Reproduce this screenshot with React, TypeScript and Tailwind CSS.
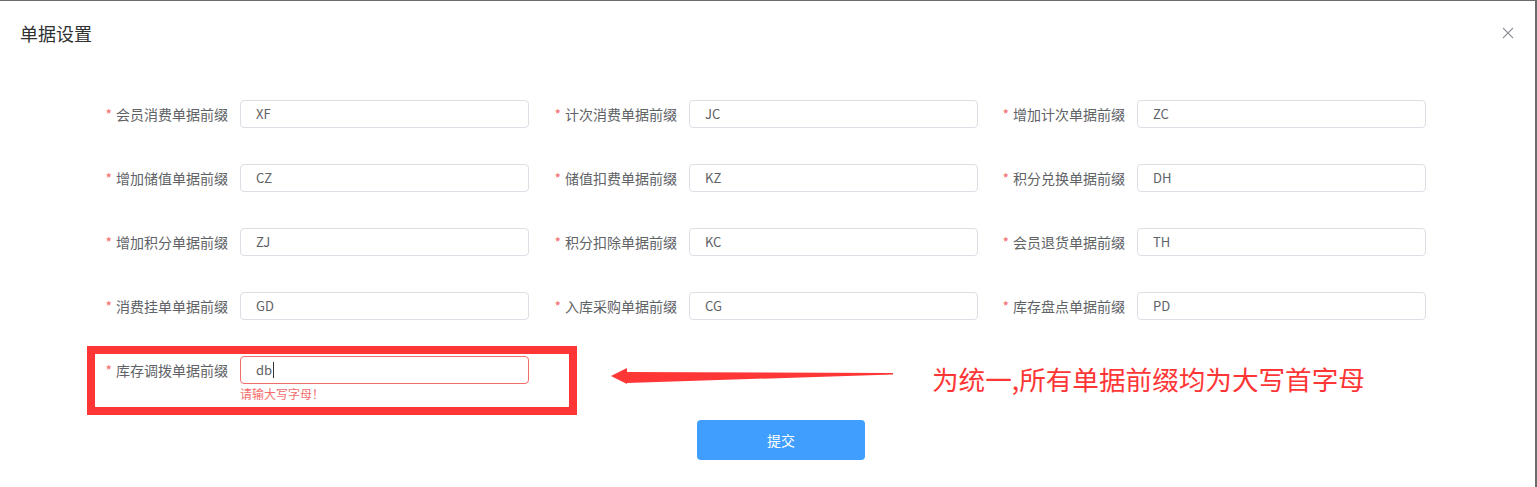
const fields = [
  { label: "会员消费单据前缀", value: "XF" },
  { label: "计次消费单据前缀", value: "JC" },
  { label: "增加计次单据前缀", value: "ZC" },
  { label: "增加储值单据前缀", value: "CZ" },
  { label: "储值扣费单据前缀", value: "KZ" },
  { label: "积分兑换单据前缀", value: "DH" },
  { label: "增加积分单据前缀", value: "ZJ" },
  { label: "积分扣除单据前缀", value: "KC" },
  { label: "会员退货单据前缀", value: "TH" },
  { label: "消费挂单单据前缀", value: "GD" },
  { label: "入库采购单据前缀", value: "CG" },
  { label: "库存盘点单据前缀", value: "PD" },
];

function FormLabel({ text }: { text: string }) {
  return (
    <label className="w-[140px] shrink-0 pr-3 text-right text-sm leading-7 text-[#606266]">
      <span className="mr-1 text-[#F56C6C]">*</span>
      {text}
    </label>
  );
}

export default function App() {
  return (
    <div
      className="relative h-[487px] w-full overflow-hidden bg-[#6b6b6b] pt-px"
      style={{ fontFamily: '"Noto Sans CJK SC", "Liberation Sans", sans-serif' }}
    >
      <div className="h-[486px] w-[1535px] bg-white">
        <div className="flex items-center justify-between px-5 pt-5">
          <span className="text-[18px] leading-6 text-[#303133]">单据设置</span>
          <svg width="12" height="12" viewBox="0 0 12 12" className="mr-px">
            <path d="M1 1L11 11M11 1L1 11" stroke="#909399" strokeWidth="1.1" fill="none" />
          </svg>
        </div>

        <div className="mt-[55px] grid grid-cols-[449px_448px_448px] gap-y-9 pl-[100px]">
          {fields.map((f) => (
            <div key={f.label} className="flex items-center">
              <FormLabel text={f.label} />
              <div className="flex h-7 w-[289px] items-center rounded border border-[#DCDFE6] px-[15px] text-[13px] text-[#606266]">
                {f.value}
              </div>
            </div>
          ))}
          <div className="flex items-center">
            <FormLabel text="库存调拨单据前缀" />
            <div className="relative w-[289px]">
              <div className="flex h-7 items-center rounded border border-[#F56C6C] px-[15px] text-[13px] text-[#606266]">
                db
                <span className="ml-px h-4 w-px bg-[#303133]" />
              </div>
              <div className="absolute left-0 top-full pt-1 text-xs leading-none text-[#F56C6C]">
                请输大写字母！
              </div>
            </div>
          </div>
        </div>

        <button className="ml-[697px] mt-9 h-10 w-[168px] rounded bg-[#409EFF] text-sm text-white">
          提交
        </button>
      </div>

      {/* annotation overlay */}
      <div className="absolute left-[87px] top-[346px] h-[69px] w-[490px] border-[8px] border-[#FF3636]" />
      <svg className="absolute left-[605px] top-[362px]" width="295" height="26" viewBox="0 0 295 26">
        <polygon points="6,14 22,6 22,10 288,11 288,12.5 22,21 22,22" fill="#FF3636" />
      </svg>
      <div className="absolute left-[932px] top-[361px] text-[26.6px] leading-9 text-[#FF3636]">
        为统一,所有单据前缀均为大写首字母
      </div>
    </div>
  );
}
